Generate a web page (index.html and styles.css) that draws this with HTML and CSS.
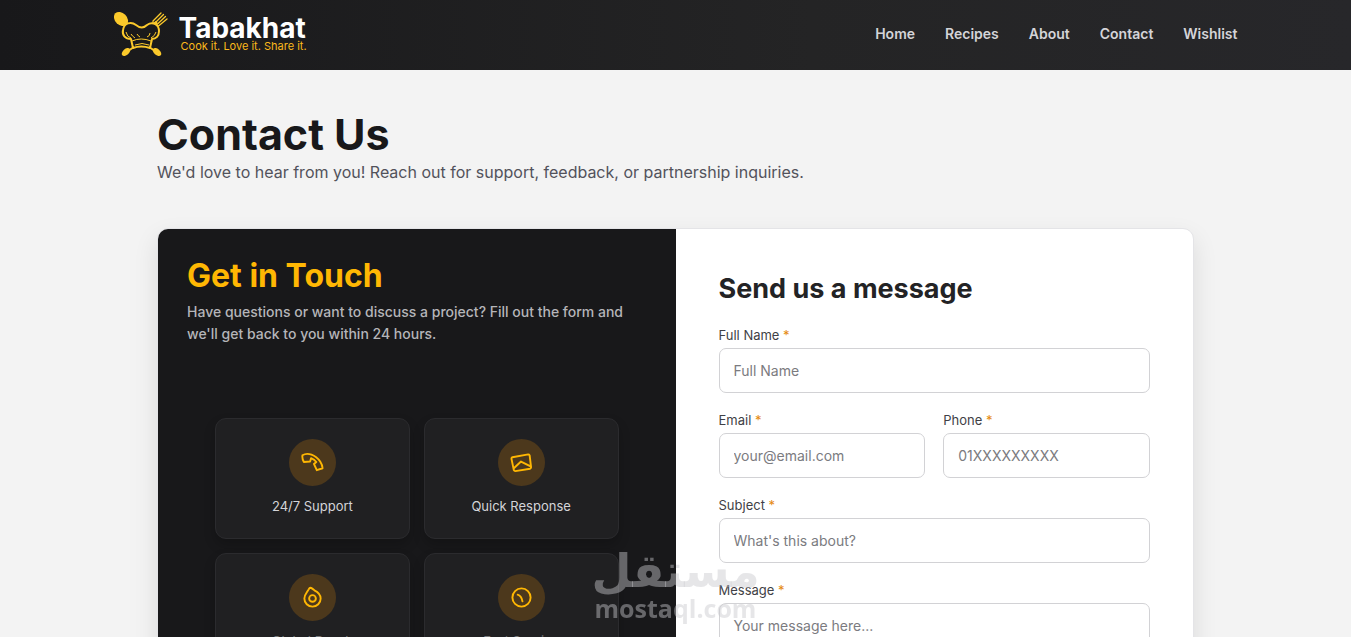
FILE: index.html
```html
<!DOCTYPE html>
<html lang="en">
<head>
    <meta charset="UTF-8">
    <meta name="viewport" content="width=device-width, initial-scale=1.0">
    <title>Tabakhat - Contact Us</title>
    <link rel="stylesheet" href="styles.css">
</head>
<body>

<header class="site-header">
    <div class="header-inner">
        <a href="#" class="brand">
            <svg class="brand-logo" viewBox="0 0 54 46" aria-hidden="true">
                <ellipse cx="7" cy="8" rx="8" ry="6" transform="rotate(45 7 8)" fill="#fbc92b"/>
                <path d="M10 11l5 3M43 11l-7 5" stroke="#fbc92b" stroke-width="3"/>
                <path d="M39 10l8-8M41 12l8.500-8.500M43 13.500l8.500-8M44.500 15l8.500-7M39 10q-1 5 5.500 5" fill="none" stroke="#fbc92b" stroke-width="1.300" stroke-linecap="round"/>
                <path d="M17 28C11 28 8 24 9 19C10 12 17 10 22 14Q28 19 33 14C39 10 45 14 45 20C45 25 42 28 38 28L36 37Q27 34 19 37Z" fill="#1a1a1b" stroke="#fbc92b" stroke-width="2" stroke-linejoin="round"/>
                <path d="M18 30Q27 26 37 30M17 27q-4-1-5-6M21 27q-3-2-4-4M26 26q-2-1-3-3M33 26q3-1 3-4M37 27q4-2 5-6M21 34Q28 31 35 34" fill="none" stroke="#fbc92b" stroke-width="1"/>
                <path d="M20 36l-6 4M35 36l6 4" stroke="#fbc92b" stroke-width="2"/>
                <ellipse cx="12" cy="41" rx="5" ry="3" transform="rotate(-42 12 41)" fill="#fbc92b"/>
                <ellipse cx="43" cy="41" rx="5" ry="3" transform="rotate(42 43 41)" fill="#fbc92b"/>
            </svg>
            <span class="brand-text">
                <span class="brand-name">Tabakhat</span>
                <span class="brand-slogan">Cook it. Love it. Share it.</span>
            </span>
        </a>
        <nav class="main-nav">
            <a href="#">Home</a>
            <a href="#">Recipes</a>
            <a href="#">About</a>
            <a href="#">Contact</a>
            <a href="#">Wishlist</a>
        </nav>
    </div>
</header>

<main class="page">
    <h1>Contact Us</h1>
    <p class="intro">We'd love to hear from you! Reach out for support, feedback, or partnership inquiries.</p>

    <div class="contact-card">
        <section class="info-panel">
            <h2>Get in Touch</h2>
            <p>Have questions or want to discuss a project? Fill out the form and we'll get back to you within 24 hours.</p>

            <div class="features">
                <div class="feature">
                    <span class="feature-icon">
                        <svg viewBox="0 0 24 24"><path d="M1.500 4.500C7 1 15 4 20 11Q22.500 15 22.500 18L16.500 20L13.500 13.500L16 11.500Q14 9 10.500 7.500L9.500 11L3 11.500Q1 8 1.500 4.500Z"/></svg>
                    </span>
                    <span class="feature-label">24/7 Support</span>
                </div>
                <div class="feature">
                    <span class="feature-icon">
                        <svg viewBox="0 0 24 24"><path d="M2.500 6.500L19 3.500Q20 3.500 20.500 4.500L22 17Q22 18 21 18.500L5.500 21Q4.500 21 4 20L1.500 8Q1.500 7 2.500 6.500ZM4 18L11.500 11L21.500 16"/></svg>
                    </span>
                    <span class="feature-label">Quick Response</span>
                </div>
                <div class="feature">
                    <span class="feature-icon">
                        <svg viewBox="0 0 24 24"><path d="M10.500 2Q12 3 14 4.500C18 6.500 20.500 9 20.500 13A8.500 8.500 0 0 1 3.500 13C3.500 9 6 7 8 3.500Q9 1.500 10.500 2Z"/><circle cx="12" cy="13" r="3.500"/></svg>
                    </span>
                    <span class="feature-label faded">Global Reach</span>
                </div>
                <div class="feature">
                    <span class="feature-icon">
                        <svg viewBox="0 0 24 24"><circle cx="12" cy="12" r="9.500"/><path d="M8 9q4 1 5 7"/></svg>
                    </span>
                    <span class="feature-label faded">Fast Service</span>
                </div>
            </div>
        </section>

        <section class="form-panel">
            <h2>Send us a message</h2>
            <form>
                <div class="field">
                    <label for="name">Full Name <span class="required">*</span></label>
                    <input type="text" id="name" placeholder="Full Name">
                </div>
                <div class="field-row">
                    <div class="field">
                        <label for="email">Email <span class="required">*</span></label>
                        <input type="email" id="email" placeholder="your@email.com">
                    </div>
                    <div class="field">
                        <label for="phone">Phone <span class="required">*</span></label>
                        <input type="tel" id="phone" placeholder="01XXXXXXXXX">
                    </div>
                </div>
                <div class="field">
                    <label for="subject">Subject <span class="required">*</span></label>
                    <input type="text" id="subject" placeholder="What's this about?">
                </div>
                <div class="field">
                    <label for="message">Message <span class="required">*</span></label>
                    <textarea id="message" placeholder="Your message here..."></textarea>
                </div>
            </form>
        </section>
    </div>
</main>

<div class="watermark">
    <span class="watermark-ar" lang="ar">مستقل</span>
    <span class="watermark-en">mostaql.com</span>
</div>

</body>
</html>
```
FILE: styles.css
```css
* {
    box-sizing: border-box;
    margin: 0;
    padding: 0;
}

body {
    font-family: Inter, "Liberation Sans", sans-serif;
    background: #f3f3f3;
    color: #18181a;
}

a {
    text-decoration: none;
}

/* header */
.site-header {
    position: sticky;
    top: 0;
    z-index: 10;
    background: linear-gradient(90deg, #18181a, #242425 60%, #27272a);
}

.header-inner {
    display: flex;
    align-items: center;
    justify-content: space-between;
    max-width: 1152px;
    height: 70px;
    margin: 0 auto;
    padding: 0 14px 3px;
}

.brand {
    display: flex;
    align-items: center;
    gap: 11px;
}

.brand-logo {
    width: 54px;
    height: 46px;
}

.brand-text {
    display: flex;
    flex-direction: column;
}

.brand-name {
    font-size: 28px;
    line-height: 25px;
    font-weight: 700;
    color: #fff;
}

.brand-slogan {
    padding-left: 2px;
    font-size: 11px;
    line-height: 11px;
    color: #fbb91b;
}

.main-nav {
    display: flex;
    gap: 30px;
}

.main-nav a {
    font-size: 14px;
    font-weight: 600;
    color: #d4d4d8;
}

/* page */
.page {
    max-width: 1081px;
    margin: 0 auto;
    padding: 42px 22px;
}

h1 {
    font-size: 43px;
    line-height: 44px;
    font-weight: 700;
}

.intro {
    margin-top: 4px;
    font-size: 16px;
    line-height: 24px;
    color: #52525b;
}

.contact-card {
    display: grid;
    grid-template-columns: 1fr 1fr;
    margin-top: 44px;
    background: #fff;
    border: 1px solid #e4e4e7;
    border-radius: 11px;
    overflow: hidden;
    box-shadow: 0 10px 24px rgba(0, 0, 0, 0.1);
}

.info-panel {
    padding: 29px;
    background: #18181a;
}

.info-panel h2 {
    font-size: 32px;
    line-height: 36px;
    font-weight: 700;
    color: #ffb703;
}

.info-panel p {
    margin-top: 7px;
    font-size: 14px;
    line-height: 22px;
    font-weight: 500;
    color: #b5b5b9;
}

.features {
    display: grid;
    grid-template-columns: 1fr 1fr;
    gap: 14px;
    margin: 73px 28px 0;
}

.feature {
    display: flex;
    flex-direction: column;
    align-items: center;
    gap: 10px;
    min-height: 121px;
    padding: 20px;
    background: #202022;
    border: 1px solid #2b2b2e;
    border-radius: 11px;
    box-shadow: 0 6px 12px rgba(0, 0, 0, 0.2);
}

.feature-icon {
    display: flex;
    align-items: center;
    justify-content: center;
    width: 47px;
    height: 47px;
    border-radius: 50%;
    background: #4c381c;
}

.feature-icon svg {
    width: 23px;
    height: 23px;
    fill: none;
    stroke: #ffb703;
    stroke-width: 2;
    stroke-linecap: round;
    stroke-linejoin: round;
}

.feature-label {
    font-size: 13px;
    line-height: 20px;
    color: #d4d4d8;
}

.faded {
    opacity: 0.5;
}

/* form */
.form-panel {
    padding: 43px;
}

.form-panel h2 {
    margin-bottom: 22px;
    font-size: 27px;
    line-height: 34px;
    font-weight: 700;
    color: #232325;
}

form {
    display: flex;
    flex-direction: column;
    gap: 20px;
}

.field-row {
    display: grid;
    grid-template-columns: 1fr 1fr;
    gap: 18px;
}

.field label {
    display: block;
    margin-bottom: 6px;
    font-size: 13px;
    line-height: 14px;
    color: #3f3f46;
}

.required {
    color: #e5890f;
}

.field input,
.field textarea {
    display: block;
    width: 100%;
    height: 45px;
    padding: 0 14px;
    font-family: inherit;
    font-size: 14px;
    line-height: 20px;
    color: #18181a;
    background: #fff;
    border: 1px solid #d2d2d5;
    border-radius: 7px;
    outline: none;
}

.field textarea {
    height: 130px;
    padding: 12px 14px;
    resize: vertical;
}

.field ::placeholder {
    color: #7b7b80;
}

/* watermark over the page */
.watermark {
    position: fixed;
    bottom: 16px;
    left: 50%;
    z-index: 20;
    display: flex;
    flex-direction: column;
    align-items: center;
    transform: translateX(-50%);
    color: rgba(200, 200, 205, 0.45);
    font-weight: 700;
    pointer-events: none;
}

.watermark-ar {
    font-family: "DejaVu Sans", sans-serif;
    font-size: 46px;
    line-height: 48px;
}

.watermark-en {
    font-family: "Open Sans", sans-serif;
    font-size: 25px;
    line-height: 26px;
}
```
